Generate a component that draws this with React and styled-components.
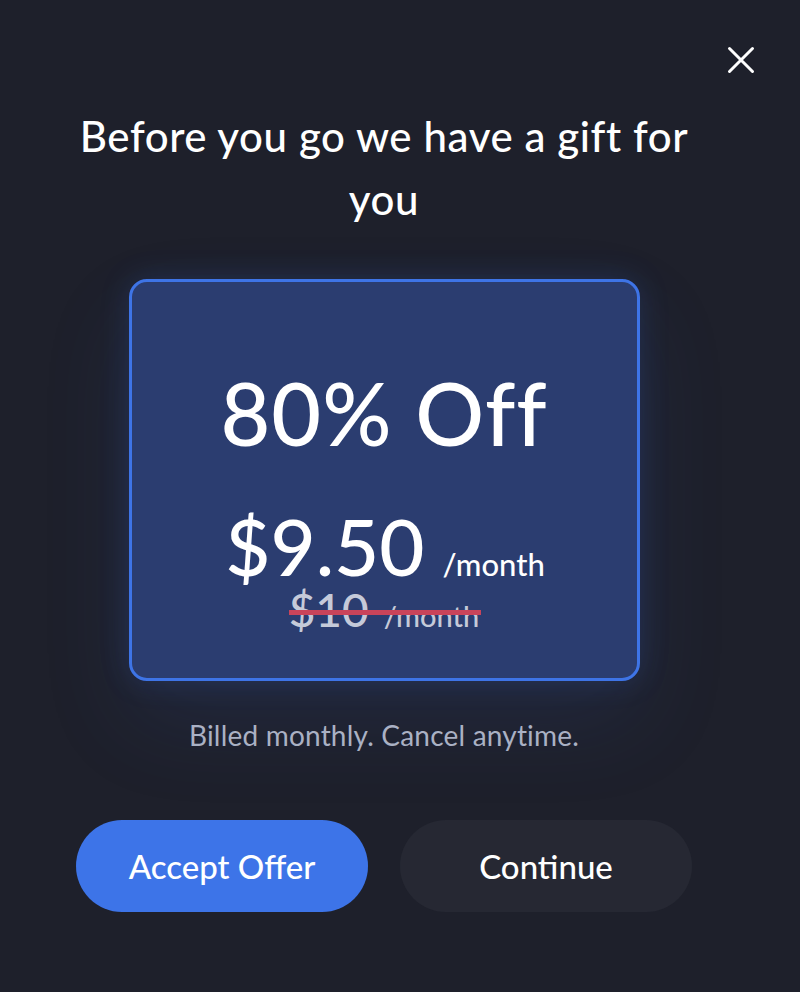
import React from "react";
import styled, { createGlobalStyle } from "styled-components";

const Global = createGlobalStyle`
  html, body { margin: 0; padding: 0; background: #1e202b; }
  body { font-family: Lato, "Open Sans", sans-serif; color: #fff; }
`;

const Page = styled.div`
  width: 800px;
  height: 992px;
  box-sizing: border-box;
  background: #1e202b;
  padding: 44px 43px 0 76px;
  display: flex;
  flex-direction: column;
`;

const TopBar = styled.div`
  display: flex;
  justify-content: flex-end;
  height: 32px;
`;

const CloseButton = styled.button`
  width: 32px;
  height: 32px;
  padding: 0;
  border: none;
  background: transparent;
  display: flex;
  align-items: center;
  justify-content: center;
  cursor: pointer;
`;

const Content = styled.div`
  width: 616px;
  display: flex;
  flex-direction: column;
  align-items: center;
`;

const Title = styled.h1`
  margin: 29px 0 0;
  font-size: 42px;
  font-weight: 500;
  line-height: 63px;
  text-align: center;
  letter-spacing: 0.6px;
`;

const Card = styled.div`
  margin-top: 48px;
  width: 511px;
  height: 402px;
  box-sizing: border-box;
  border: 3px solid #3e74e6;
  border-radius: 18px;
  background: #2b3d70;
  box-shadow: 0 0 30px rgba(60, 110, 220, 0.2), 0 40px 90px rgba(60, 95, 180, 0.14);
  display: flex;
  flex-direction: column;
  align-items: center;
  padding-top: 88px;
`;

const Headline = styled.div`
  font-size: 86px;
  font-weight: 500;
  line-height: 86px;
  letter-spacing: 1px;
`;

const PriceRow = styled.div`
  margin-top: 51px;
  display: flex;
  align-items: baseline;
  gap: 18px;
  line-height: 1;
  margin-left: 2px;
`;

const Price = styled.span`
  font-size: 78px;
  font-weight: 500;
`;

const Per = styled.span`
  font-size: 31px;
  font-weight: 500;
`;

const OldRow = styled.div`
  position: relative;
  margin-top: 2px;
  display: flex;
  align-items: baseline;
  gap: 15px;
  color: #c5cad9;
  line-height: 1;
`;

const OldPrice = styled.span`
  font-size: 46px;
  font-weight: 500;
`;

const OldPer = styled.span`
  font-size: 29px;
  font-weight: 500;
`;

const Strike = styled.div`
  position: absolute;
  left: 0;
  right: -2px;
  top: 23px;
  height: 5px;
  background: #c9445a;
`;

const Note = styled.p`
  margin: 38px 0 0;
  font-size: 28px;
  color: #aab1c4;
  line-height: 32px;
  letter-spacing: 0.2px;
`;

const Actions = styled.div`
  margin-top: 69px;
  display: flex;
  gap: 32px;
  width: 100%;
`;

const ActionButton = styled.button`
  flex: 1;
  height: 92px;
  border: none;
  border-radius: 46px;
  background: ${(p) => (p.$primary ? "#3d74e8" : "#262833")};
  color: #fff;
  font-family: Lato, "Open Sans", sans-serif;
  font-size: 33px;
  font-weight: 500;
  cursor: pointer;
`;

export default function App() {
  return (
    <>
      <Global />
      <Page>
        <TopBar>
          <CloseButton aria-label="Close">
            <svg width="28" height="28" viewBox="0 0 28 28" fill="none">
              <path d="M2.5 2.5 L25.5 25.5 M25.5 2.5 L2.5 25.5" stroke="#fff" strokeWidth="3" strokeLinecap="round" />
            </svg>
          </CloseButton>
        </TopBar>
        <Content>
          <Title>
            Before you go we have a gift for
            <br />
            you
          </Title>
          <Card>
            <Headline>80% Off</Headline>
            <PriceRow>
              <Price>$9.50</Price>
              <Per>/month</Per>
            </PriceRow>
            <OldRow>
              <OldPrice>$10</OldPrice>
              <OldPer>/month</OldPer>
              <Strike />
            </OldRow>
          </Card>
          <Note>Billed monthly. Cancel anytime.</Note>
          <Actions>
            <ActionButton $primary>Accept Offer</ActionButton>
            <ActionButton>Continue</ActionButton>
          </Actions>
        </Content>
      </Page>
    </>
  );
}
